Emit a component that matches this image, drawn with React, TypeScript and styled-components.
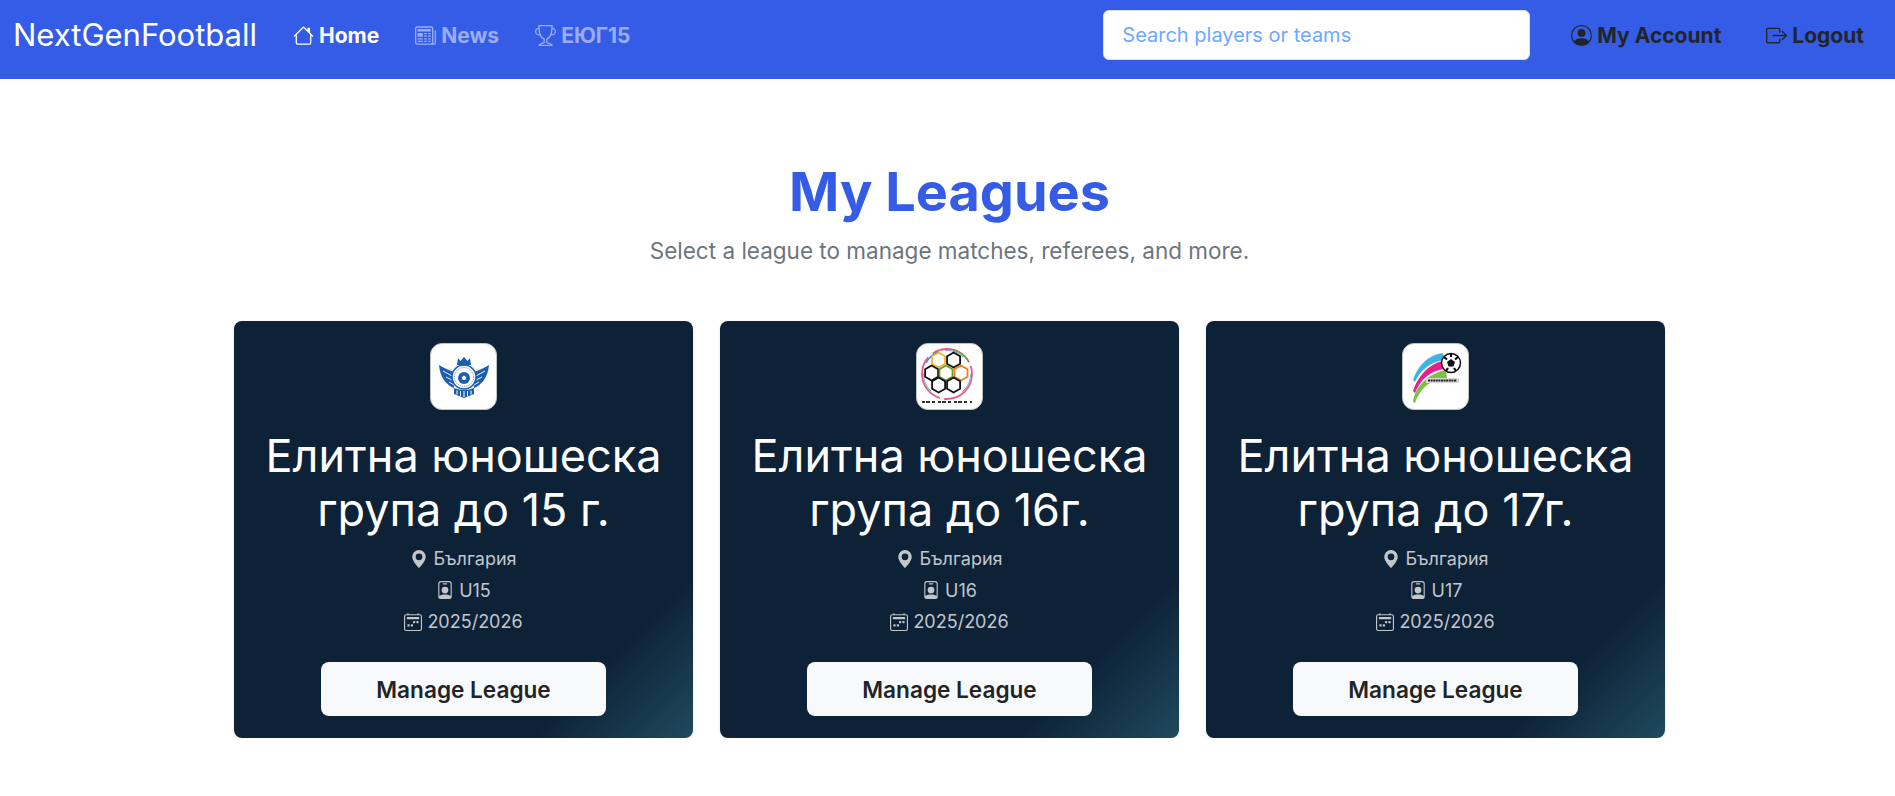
import React from 'react';
import styled, { createGlobalStyle } from 'styled-components';
import { BsBoxArrowRight, BsCalendar2Week, BsGeoAltFill, BsHouse, BsNewspaper, BsPersonBadge, BsPersonCircle, BsTrophy } from 'react-icons/bs';

const GlobalStyle = createGlobalStyle`
  html, body {
    margin: 0;
    padding: 0;
    background: #fff;
    font-family: Inter, "Noto Sans", sans-serif;
    color: #212529;
  }
  * { box-sizing: border-box; }
`;

const Navbar = styled.nav`
  height: 79px;
  background: #355ce6;
  display: flex;
  align-items: center;
  padding: 0 31px 9px 13px;
`;

const Brand = styled.a`
  font-size: 31px;
  line-height: 38px;
  color: #fff;
  margin-right: 36px;
`;

const NavLink = styled.a<{ $tone: 'active' | 'muted' | 'dark' }>`
  display: flex;
  align-items: center;
  gap: 5px;
  font-size: 21px;
  font-weight: 700;
  color: ${(p) => (p.$tone === 'active' ? '#fff' : p.$tone === 'muted' ? 'rgba(255,255,255,0.5)' : '#212529')};

  svg { width: 21px; height: 21px; }
`;

const NavLeft = styled.div`
  display: flex;
  gap: 36px;
`;

const NavRight = styled.div`
  display: flex;
  align-items: center;
  gap: 45px;
  margin-left: auto;
`;

const SearchInput = styled.input`
  width: 427px;
  height: 50px;
  margin-right: -4px;
  border: 1px solid #dee2e6;
  border-radius: 6px;
  padding: 0 18px;
  font: 400 20px Inter, sans-serif;
  background: #fff;
  outline: none;

  &::placeholder { color: #6ea8fe; opacity: 1; }
`;

const Main = styled.main`
  padding: 79px 230px 0 234px;
`;

const Heading = styled.h1`
  margin: 0;
  text-align: center;
  font-size: 54px;
  line-height: 67px;
  font-weight: 700;
  color: #355ce6;
`;

const Subtitle = styled.p`
  margin: 11px 0 0;
  text-align: center;
  font-size: 22.5px;
  line-height: 30px;
  color: #6c757d;
`;

const CardGrid = styled.div`
  display: grid;
  grid-template-columns: repeat(3, 459px);
  gap: 27px;
  margin-top: 55px;
`;

const Card = styled.article`
  height: 417px;
  border-radius: 8px;
  padding: 22px 12px 0;
  display: flex;
  flex-direction: column;
  align-items: center;
  text-align: center;
  background: linear-gradient(135deg, #0d2137 0%, #0d2137 81%, #1f4a5e 100%);
  box-shadow: 0 1px 3px rgba(0, 0, 0, 0.12);
`;

const LogoBox = styled.div`
  width: 67px;
  height: 67px;
  border-radius: 12px;
  background: #fff;
  border: 1px solid #bfc3c8;
  overflow: hidden;

  svg { width: 65px; height: 65px; display: block; }
`;

const CardTitle = styled.h2`
  margin: 19px 0 0;
  font-size: 45px;
  line-height: 53.5px;
  font-weight: 400;
  color: #fff;
`;

const Meta = styled.div`
  margin-top: 9px;
  display: flex;
  flex-direction: column;
  align-items: center;
  gap: 4.5px;
`;

const MetaRow = styled.div`
  display: flex;
  align-items: center;
  gap: 5px;
  font-size: 18px;
  line-height: 27px;
  color: rgba(255, 255, 255, 0.75);

  svg { width: 18px; height: 18px; }
`;

const ManageButton = styled.button`
  margin-top: 27px;
  width: 285px;
  height: 54px;
  border: none;
  border-radius: 8px;
  background: #f8f9fa;
  color: #212529;
  font: 600 22.6px Inter, sans-serif;
`;

const Wing = () => (
  <g>
    <path d='M8 21c5 3 11 6 16 7l-1 16C15 41 9 33 8 21z' fill='#1d5fae' />
    <path d='M12 27l11 6M15 33l8 4M18 38l5 3' stroke='#fff' strokeWidth='.9' />
  </g>
);

const ShieldLogo = () => (
  <svg viewBox='0 0 65 65'>
    <Wing />
    <g transform='matrix(-1 0 0 1 66 0)'>
      <Wing />
    </g>
    <path d='M27 14l2.500 3 3.500-4 3.500 4 2.500-3 1 7H26z' fill='#1d5fae' />
    <circle cx='33' cy='33' r='12' fill='#fff' stroke='#1d5fae' strokeWidth='1.600' />
    <circle cx='33' cy='33' r='9.500' fill='none' stroke='#1d5fae' strokeWidth='.7' strokeDasharray='1 1' />
    <circle cx='33' cy='34' r='6' fill='#1d5fae' />
    <path d='M33 31.500l2.300 1.700-.9 2.700h-2.800l-.9-2.700z' fill='#fff' />
    <path d='M23 44c6 2.500 14 2.500 20 0v6l-10 4-10-4z' fill='#1d5fae' />
    <path d='M26 46.500v4M29.500 47v5M33 47v6M36.500 47v5M40 46.500v4' stroke='#fff' strokeWidth='1' />
  </svg>
);

const hexagons = [
  [21.6, 16, '#f0b429'], [36.6, 16, '#111'], [14.6, 29, '#111'], [29, 29, '#6c9a2e'],
  [44, 29, '#ef7d1a'], [21.6, 41, '#111'], [36.6, 41, '#111'],
] as const;

const HexLogo = () => (
  <svg viewBox='0 0 65 65'>
    <circle cx='30' cy='30' r='25' fill='none' stroke='#ec5a86' strokeWidth='1.800' strokeDasharray='42 4 50 6' />
    <circle cx='30' cy='30' r='23.500' fill='none' stroke='#58b9d8' strokeWidth='1' strokeDasharray='20 34' />
    <path d='M9 19A24 24 0 0 1 21 8' fill='none' stroke='#4a8fd0' strokeWidth='1.500' />
    <path d='M37 6a25 25 0 0 1 15 12' fill='none' stroke='#7da53b' strokeWidth='1.500' />
    {hexagons.map(([x, y, color]) => (
      <path
        key={`${x}-${y}`}
        d={`M${x} ${y - 7.5}l6.500 3.700v7.600l-6.500 3.700-6.500-3.700v-7.600z`}
        fill='none'
        stroke={color}
        strokeWidth='1.800'
      />
    ))}
    <path d='M5 58h50' stroke='#333' strokeWidth='2' strokeDasharray='3 1 4 2 3 3' />
  </svg>
);

const SwooshLogo = () => (
  <svg viewBox='0 0 65 65'>
    <path d='M10 36C15 21 25 11 40 9l1 7C28 18 18 25 12 38z' fill='#3fb2e8' />
    <path d='M10 47C15 32 25 21 39 17l2 8C28 27 18 34 12 49z' fill='#e6218f' />
    <path d='M10 58C12 42 26 29 43 26l1 8C30 35 18 42 12 59z' fill='#7cc142' />
    <circle cx='48' cy='19' r='9.500' fill='#fff' stroke='#111' strokeWidth='1.500' />
    <path d='M48 15l4 3-1.500 4.500h-5L44 18z' fill='#111' />
    <path d='M41 13l3 2.500M55 13l-3 2.500M48 10v3M43 27l2-3M53 27l-2-3' stroke='#111' strokeWidth='2.200' />
    <rect x='23' y='34' width='33' height='5' fill='#d8d8d8' />
    <path d='M25 36.500h29' stroke='#222' strokeWidth='2' strokeDasharray='2 .6' />
  </svg>
);

const leagues = [
  { id: 15, title: 'Елитна юношеска група до 15 г.', age: 'U15', logo: <ShieldLogo /> },
  { id: 16, title: 'Елитна юношеска група до 16г.', age: 'U16', logo: <HexLogo /> },
  { id: 17, title: 'Елитна юношеска група до 17г.', age: 'U17', logo: <SwooshLogo /> },
];

const App: React.FC = () => {
  return (
    <>
      <GlobalStyle />
      <Navbar>
        <Brand>NextGenFootball</Brand>
        <NavLeft>
          <NavLink $tone='active'><BsHouse />Home</NavLink>
          <NavLink $tone='muted'><BsNewspaper />News</NavLink>
          <NavLink $tone='muted'><BsTrophy />ЕЮГ15</NavLink>
        </NavLeft>
        <NavRight>
          <SearchInput placeholder='Search players or teams' />
          <NavLink $tone='dark'><BsPersonCircle />My Account</NavLink>
          <NavLink $tone='dark'><BsBoxArrowRight />Logout</NavLink>
        </NavRight>
      </Navbar>
      <Main>
        <Heading>My Leagues</Heading>
        <Subtitle>Select a league to manage matches, referees, and more.</Subtitle>
        <CardGrid>
          {leagues.map((league) => (
            <Card key={league.id}>
              <LogoBox>{league.logo}</LogoBox>
              <CardTitle>{league.title}</CardTitle>
              <Meta>
                <MetaRow><BsGeoAltFill />България</MetaRow>
                <MetaRow><BsPersonBadge />{league.age}</MetaRow>
                <MetaRow><BsCalendar2Week />2025/2026</MetaRow>
              </Meta>
              <ManageButton>Manage League</ManageButton>
            </Card>
          ))}
        </CardGrid>
      </Main>
    </>
  );
};

export default App;
